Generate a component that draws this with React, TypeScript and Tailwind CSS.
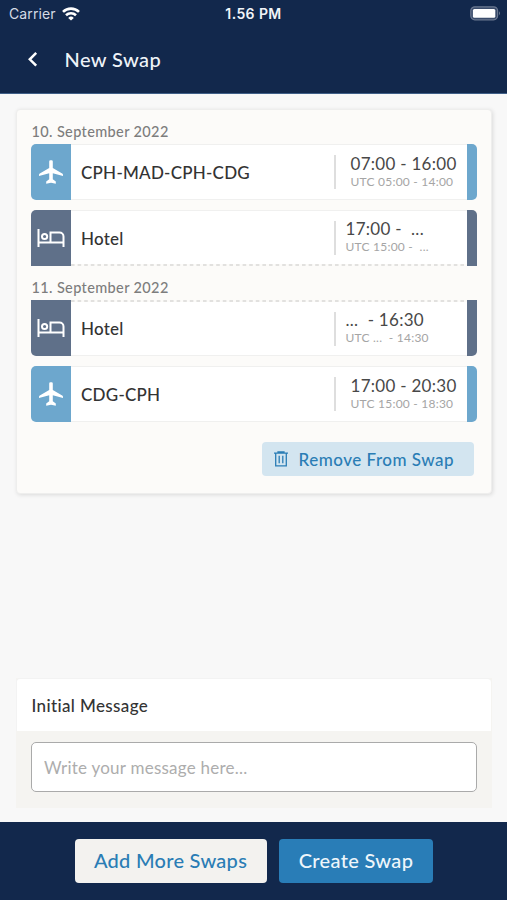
import React from "react";

type Kind = "flight" | "hotel";

interface Duty {
  kind: Kind;
  title: string;
  time: string;
  utc: string;
  // which edge is open because the duty continues on another day
  open?: "top" | "bottom";
}

interface Day {
  date: string;
  duties: Duty[];
}

const days: Day[] = [
  {
    date: "10. September 2022",
    duties: [
      { kind: "flight", title: "CPH-MAD-CPH-CDG", time: "07:00 - 16:00", utc: "UTC 05:00 - 14:00" },
      { kind: "hotel", title: "Hotel", time: "17:00 -  ...", utc: "UTC 15:00 -  ...", open: "bottom" },
    ],
  },
  {
    date: "11. September 2022",
    duties: [
      { kind: "hotel", title: "Hotel", time: "...  - 16:30", utc: "UTC ...  - 14:30", open: "top" },
      { kind: "flight", title: "CDG-CPH", time: "17:00 - 20:30", utc: "UTC 15:00 - 18:30" },
    ],
  },
];

function PlaneIcon() {
  return (
    <svg width="26" height="26" viewBox="0 0 26 26" fill="white">
      <path d="M11.2 2.4Q11.2 1.2 12.4 1.2h1.2q1.2 0 1.2 1.2V9l9.4 5.6q.8.5.8 1.4v1L14.8 14.2v6l3 2.2v2.4l-4.8-1-4.8 1v-2.4l3-2.2v-6L1 17v-1q0-.9.8-1.4L11.2 9z" />
    </svg>
  );
}

function BedIcon() {
  return (
    <svg width="28" height="20" viewBox="0 0 28 20" fill="none" stroke="white" strokeWidth="2">
      <path d="M1.5 1v18M1.5 14.5h25M26.5 19V8.5a4 4 0 0 0-4-4H13.5v10" />
      <circle cx="7.6" cy="8.5" r="2.6" />
    </svg>
  );
}

function TrashIcon() {
  return (
    <svg width="14" height="16" viewBox="0 0 14 16" fill="none" stroke="#2a7db5" strokeWidth="1.3">
      <path d="M0 2.2h14M4 1.6V1h6v.6M1.7 2.2v12.6h10.6V2.2M5.2 4.8v7.4M8.8 4.8v7.4" />
    </svg>
  );
}

function StatusBar() {
  return (
    <div className="h-[27px] px-[9px] grid grid-cols-3 items-center font-['Inter',sans-serif] text-white">
      <div className="flex items-center gap-[6px]">
        <span className="text-[14px] text-[#d5dbe5] tracking-[0.1px]">Carrier</span>
        <svg width="18" height="14" viewBox="0 0 18 14" fill="none" stroke="white" strokeWidth="2.6">
          <path d="M1 4.9a11.5 11.5 0 0 1 16 0M4 8.3a7.2 7.2 0 0 1 10 0" />
          <path d="M9 13.6 6.2 10.9a4 4 0 0 1 5.6 0z" fill="white" stroke="none" />
        </svg>
      </div>
      <span className="text-[14px] font-semibold text-center tracking-[0.4px] text-[#f1f4f8]">1.56 PM</span>
      <div className="flex justify-end items-center -mr-[3px]">
        <svg width="31" height="15" viewBox="0 0 31 15">
          <rect x="0.8" y="0.8" width="26.8" height="13" rx="4" fill="#3a4c6b" stroke="#6b7890" strokeWidth="1.2" />
          <rect x="2.9" y="2.9" width="22.4" height="8.8" rx="1.5" fill="white" />
          <path d="M29 5.2q2 2 0 4z" fill="#6b7890" />
        </svg>
      </div>
    </div>
  );
}

// short dashes on the edge where the duty carries over
function OpenEdge() {
  return (
    <svg className="block w-full h-[2px] shrink-0 bg-[#fcfbf9]" stroke="#d9d9d6" strokeWidth="1.5" strokeDasharray="3.6 3">
      <line x1="0" y1="1" x2="100%" y2="1" />
    </svg>
  );
}

function DutyRow({ duty }: { duty: Duty }) {
  const flight = duty.kind === "flight";
  const color = flight ? "bg-[#6da7cd]" : "bg-[#5f7089]";
  const corners = duty.open === "top" ? "rounded-b-[5px]" : duty.open === "bottom" ? "rounded-t-[5px]" : "rounded-[5px]";

  return (
    <div className={`h-[56px] flex overflow-hidden ${corners}`}>
      <div className={`w-[40px] shrink-0 flex items-center justify-center ${color}`}>
        {flight ? <PlaneIcon /> : <BedIcon />}
      </div>
      <div className="flex-1 flex flex-col bg-white">
        {duty.open === "top" ? <OpenEdge /> : <div className="h-px shrink-0 bg-[#f0f0ef]" />}
        <div className="flex-1 flex items-center pl-[10px]">
          <span className={`flex-1 text-[17px] font-medium text-[#333] whitespace-pre tracking-[0.25px] ${duty.open === "bottom" ? "pt-[2px]" : "pt-[1px]"}`}>
            {duty.title}
          </span>
          <div className={`w-[133px] h-[34px] border-l-2 border-[#dedede] flex flex-col justify-center pb-[2px] whitespace-pre ${flight ? "pl-[15px]" : "pl-[10px]"}`}>
            <span className="shrink-0 text-[17px] leading-[20px] text-[#484848] tracking-[0.28px]">{duty.time}</span>
            <span className="shrink-0 text-[12px] leading-[15px] text-[#a5a5a5] tracking-[0.23px]">{duty.utc}</span>
          </div>
        </div>
        {duty.open === "bottom" ? <OpenEdge /> : <div className="h-px shrink-0 bg-[#f0f0ef]" />}
      </div>
      <div className={`w-[10px] shrink-0 ${color}`} />
    </div>
  );
}

export default function App() {
  return (
    <div className="w-[507px] h-[900px] flex flex-col bg-[#f8f8f8] font-['Lato',sans-serif] overflow-hidden">
      <header className="h-[94px] shrink-0 bg-[#12284c] border-b border-[#3f5f88]">
        <StatusBar />
        <div className="h-[64px] flex items-center pl-[27px]">
          <svg width="12" height="16" viewBox="0 0 12 16" fill="none" stroke="white" strokeWidth="2.5">
            <path d="M9.2 1.9 2.8 8.3l6.4 6.4" />
          </svg>
          <h1 className="ml-[25.5px] text-[20px] font-medium text-[#eef3f8] tracking-[0.4px]">New Swap</h1>
        </div>
      </header>

      <main className="flex-1 flex flex-col justify-between pt-[15px] pb-[14px] pl-[16px] pr-[15px]">
        <section className="h-[385px] bg-[#fcfbf9] rounded-[4px] border border-[#eeeeed] pl-[14px] pr-[14.5px] pt-[10px] shadow-[1px_1px_4px_rgba(0,0,0,0.12)]">
          {days.map((day) => (
            <div key={day.date} className="mb-[10px]">
              <h2 className="h-[24px] pl-[0.5px] pt-[2px] text-[14.5px] leading-[20px] font-medium text-[#7d7d7d] tracking-[0.37px]">{day.date}</h2>
              <div className="flex flex-col gap-[10px]">
                {day.duties.map((duty) => (
                  <DutyRow key={duty.title} duty={duty} />
                ))}
              </div>
            </div>
          ))}
          <div className="flex justify-end pt-[10px] pr-[2.5px]">
            <button className="w-[212px] h-[34px] rounded-[4px] bg-[#d3e5f0] flex items-center pl-[12px] gap-[10.5px] text-[#2a7db5]">
              <TrashIcon />
              <span className="pt-[1px] text-[17px] font-medium tracking-[0.5px] whitespace-nowrap">Remove From Swap</span>
            </button>
          </div>
        </section>

        <section className="h-[130px] bg-[#f5f4f1]">
          <h2 className="h-[53px] mr-[1px] flex items-center bg-white border-t border-l border-[#f3f3f3] rounded-t-[4px] pl-[14.5px] pt-[1px] text-[17px] font-medium text-[#333] tracking-[0.37px]">
            <span>Initial Message</span>
          </h2>
          <div className="pt-[11px] px-[15px]">
            <input
              className="w-full h-[50px] rounded-[5px] border-[1.5px] border-[#aaa] bg-white px-[12px] text-[17px] tracking-[0.23px] placeholder:text-[#adadad]"
              placeholder="Write your message here..."
            />
          </div>
        </section>
      </main>

      <footer className="h-[78px] shrink-0 bg-[#12284c] flex items-start justify-center gap-[12px] pt-[17px]">
        <button className="w-[192px] h-[44px] rounded-[4px] bg-[#f3f2ef] text-[#2a7db5] text-[20px] leading-[42px] pb-[2px] font-medium tracking-[0.27px] whitespace-nowrap">
          Add More Swaps
        </button>
        <button className="w-[154px] h-[44px] rounded-[4px] bg-[#297db7] text-[#eef6fb] text-[20px] leading-[42px] pb-[2px] pl-[1px] font-medium tracking-[0.32px] whitespace-nowrap">
          Create Swap
        </button>
      </footer>
    </div>
  );
}
